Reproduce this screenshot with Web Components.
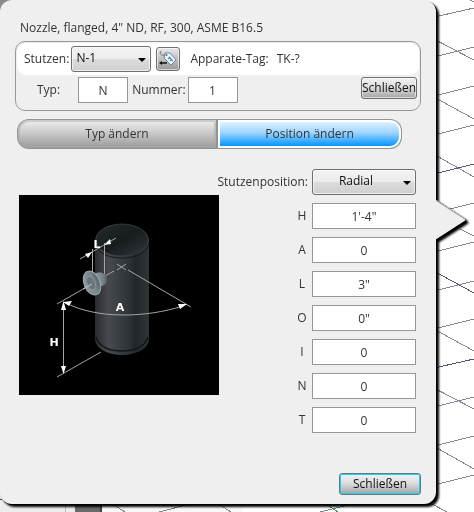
<!DOCTYPE html>
<html lang="de">
<head>
<meta charset="utf-8">
<title>Stutzen</title>
<style>
  html, body { margin: 0; min-height: 100%; }
  body { font: 12px/16px "Open Sans", "Noto Sans", sans-serif; color: #333; background: #fff; }
</style>
</head>
<body>
<nozzle-editor></nozzle-editor>

<script>
const define = (name, markup, setup) => {
  const template = document.createElement('template');
  template.innerHTML = markup;
  customElements.define(name, class extends HTMLElement {
    constructor() {
      super();
      this.attachShadow({ mode: 'open' }).append(template.content.cloneNode(true));
    }
    connectedCallback() { if (setup) setup(this, this.shadowRoot); }
  });
};

/* Wireframe canvas behind the callout */
define('wire-canvas', `
<style>
  :host { display: block; overflow: hidden; background: #fff; }
  svg { display: block; }
</style>
<svg width="474" height="512" viewBox="0 0 474 512" aria-hidden="true" shape-rendering="crispEdges" fill="none">
  <path fill="#8a8a8a" d="M0 0h14v14H0z"/>
  <path fill="#ececec" d="M0 490h75v22H0z"/>
  <path fill="#f8f8f8" d="M102 500h140v12h-140z"/>
  <path stroke="#b4bfca" d="M65.500 500v12"/>
  <path fill="#6a6a6a" d="M75 500h25v12H75z"/>
  <path fill="#444" d="M100 500h2v12h-2z"/>
  <path fill="#1c4f80" d="M0 499h2v1H0z"/>
  <path stroke="#858592" d="M430 18L474 8M430 37L474 60M430 58L474 47M430 97L474 86M430 95L474 119M430 136L474 125M430 152L474 177M450 209L474 203M460 229L474 236M430 253L474 242M430 292L474 281M430 330L474 319M430 327L474 351M430 386L474 409M430 408L474 397M430 447L474 436M430 444L474 469M430 486L474 475M470 0L474 2M430 503L447 512M320 512L352 504M111 503L125 512M159 512L190 504M217 503L231 512"/>
  <path stroke="#50566e" d="M430 175L474 164M430 269L474 293M430 369L474 359"/>
  <path stroke="#4b944b" d="M324 503L338 512"/>
</svg>`);

define('callout-panel', `
<style>
  :host { display: flex; flex-direction: column; position: relative; box-sizing: border-box; border-radius: 12px;
    background: #efefef; filter: drop-shadow(1px 1px 0 #000) drop-shadow(2px 2px 1px #000); }
  .tip { position: absolute; left: 100%; top: 200px; display: block; margin-left: -1px; }
</style>
<slot></slot>
<svg class="tip" width="31" height="40" viewBox="0 0 31 40" aria-hidden="true"><path d="M0 0L31 20L0 40Z" fill="#efefef"/><path d="M1 0L30 19" stroke="#bbb"/></svg>`);

define('push-button', `
<style>
  :host { display: block; }
  button { display: flex; align-items: center; justify-content: center; box-sizing: border-box; width: 100%; height: 22px; padding: 0;
    border: 1px solid #707070; border-radius: 3px; color: #111; font: inherit;
    background: linear-gradient(#f2f2f2, #dedede 45%, #a4a4a4); box-shadow: inset 0 0 0 1px #ffffff90; }
  :host([square]) button { height: 24px; background: linear-gradient(#e8e8e8, #999); }
  :host([default]) button { border-color: #5d7f88; box-shadow: inset 0 0 0 1px #1fcdf5; }
</style>
<button type="button"><slot></slot></button>`, (host, root) => {
  if (host.title) root.querySelector('button').setAttribute('aria-label', host.title);
});

define('tag-icon', `
<style>:host { display: block; } svg { display: block; }</style>
<svg width="18" height="18" viewBox="0 0 18 18" aria-hidden="true">
  <path d="M2 1C0 4 2 6 7 5" fill="none" stroke="#657482"/>
  <path d="M6 3L11 3L17 10L12 15L5 8Z" fill="#f4f8fb" stroke="#6c8397"/>
  <circle cx="7.500" cy="5" r="1" fill="#536b80"/>
  <path d="M9 9l2-2M11 11l2-2M10 7l4 4" stroke="#3e8ed0" stroke-width="1.300"/>
  <path d="M8 13H2" stroke="#111" stroke-width="1.500"/><path d="M0 13l3-2v4z" fill="#111"/>
</svg>`);

define('drop-down', `
<style>
  :host { display: grid; }
  select, svg { grid-area: 1 / 1; }
  select { appearance: none; box-sizing: border-box; width: 100%; height: 26px; margin: 0; padding: 0 24px 2px 4px;
    border: 1px solid #707070; border-radius: 3px; color: #111; font: inherit;
    background: linear-gradient(#f3f3f3, #ececec 48%, #dcdcdc 52%, #cfcfcf); box-shadow: inset 0 0 0 1px #ffffffa0; }
  :host([centered]) select { padding: 0 16px 2px 0; text-align-last: center; }
  svg { align-self: center; justify-self: end; margin: 2px 5px 0 0; pointer-events: none; }
</style>
<select></select>
<svg width="8" height="4" viewBox="0 0 8 4" aria-hidden="true"><path d="M0 0h8L4 4z" fill="#000"/></svg>`, (host, root) => {
  const select = root.querySelector('select');
  select.setAttribute('aria-label', host.getAttribute('label'));
  select.replaceChildren(...host.getAttribute('options').split('|').map(t => new Option(t)));
});

define('value-field', `
<style>
  :host { display: flex; align-items: center; justify-content: flex-end; gap: var(--field-gap, 4px); }
  input { box-sizing: border-box; width: var(--field-width, 104px); height: 26px; margin: 0; padding: 0;
    border: 1px solid #969696; border-radius: 0; background: #fff; color: #333; font: inherit; text-align: center; }
  label { min-width: 12px; text-align: center; }
</style>
<label for="value"></label><input id="value" type="text">`, (host, root) => {
  root.querySelector('label').textContent = host.getAttribute('label');
  root.querySelector('input').value = host.getAttribute('value');
});

define('nozzle-header', `
<style>
  :host { display: block; box-sizing: border-box; border: 1px solid #969696; border-radius: 10px; padding: 1px; }
  .top, .bottom { display: flex; align-items: center; }
  .top { height: 32px; padding-left: 7px; border-radius: 9px; background: #fff; }
  .top drop-down { width: 80px; margin: 0 5px 0 2px; }
  .top push-button { width: 24px; margin-right: 10px; }
  .tag { margin-left: 8px; }
  .bottom { padding: 2px 2px 6px 20px; }
  .bottom value-field { --field-width: 50px; }
  .type { --field-gap: 18px; margin-right: 4px; }
  .number { --field-gap: 2px; }
  .bottom push-button { width: 56px; margin: 0 0 4px auto; }
</style>
<div class="top">
  <span>Stutzen:</span><drop-down label="Stutzen" options="N-1"></drop-down>
  <push-button square title="Tag bearbeiten"><tag-icon></tag-icon></push-button>
  <span>Apparate-Tag:</span><span class="tag">TK-?</span>
</div>
<div class="bottom">
  <value-field class="type" label="Typ:" value="N"></value-field>
  <value-field class="number" label="Nummer:" value="1"></value-field>
  <push-button>Schließen</push-button>
</div>`);

define('mode-switch', `
<style>
  :host { display: grid; grid-template-columns: 201fr 184fr; height: 30px; }
  button { box-sizing: border-box; margin: 0; padding: 0 0 1px; border: 1px solid #8c9696; color: #333; font: inherit; }
  .type { border-right-width: 2px; border-radius: 12px 0 0 12px; background: linear-gradient(#f0f0f0, #cfcfcf 40%, #999); box-shadow: inset 0 0 0 2px #a8a8a880; }
  .position { border-left: 0; border-radius: 0 12px 12px 0; box-shadow: inset 0 0 0 2px #fff;
    background: linear-gradient(#eaf6ff, #9ed5ff 45%, #0c98ff 90%); }
</style>
<button type="button" class="type" aria-pressed="false">Typ ändern</button>
<button type="button" class="position" aria-pressed="true">Position ändern</button>`);

define('nozzle-diagram', `
<style>
  :host { display: block; width: 200px; background: #000; }
  svg { display: block; width: 100%; }
  text { font: bold 11px "DejaVu Sans", sans-serif; fill: #fff; text-anchor: middle; }
</style>
<svg viewBox="0 0 200 200" role="img" aria-label="Radiale Stutzenposition mit den Maßen H, A und L">
  <defs>
    <linearGradient id="shell"><stop offset="0" stop-color="#292b2e"/><stop offset=".25" stop-color="#47494e"/><stop offset=".6" stop-color="#303538"/><stop offset=".75" stop-color="#20272a"/><stop offset="1" stop-color="#303437"/></linearGradient>
    <linearGradient id="lid" x2="1" y2="1"><stop offset="0" stop-color="#252b2e"/><stop offset=".5" stop-color="#171c1e"/><stop offset="1" stop-color="#30373a"/></linearGradient>
    <linearGradient id="flange"><stop offset="0" stop-color="#8e999f"/><stop offset=".6" stop-color="#7a868d"/><stop offset="1" stop-color="#55616a"/></linearGradient>
  </defs>
  <path fill="url(#shell)" d="M76 46C76 36 88 29 103 29S130 36 130 46V144C130 153 118 160 103 160S76 153 76 144Z"/>
  <ellipse cx="103" cy="45" rx="26" ry="16" fill="url(#lid)" stroke="#3b4144" stroke-width=".7"/>
  <path d="M76 47C77 57 88 63 103 63S129 57 130 47" fill="none" stroke="#15191b"/>
  <path d="M77 142C80 152 91 156 103 156S126 152 129 142" fill="none" stroke="#121618" stroke-width="1.500"/>
  <g fill="none" stroke="#a3a5a6" stroke-width="1">
    <path d="M95 76L84 82M66 93L38 109M98 69L107 75M98 75L107 69M109 75L172 112M38 182L82 157"/>
    <path d="M44.500 110V176M73.500 54V78M85.500 48V80M61 64L97 43"/>
    <path d="M47 108C78 124 126 123 164 111"/>
  </g>
  <path fill="url(#flange)" d="M76 79C80 76 88 78 88 84S84 91 79 92Z"/>
  <ellipse cx="73" cy="88" rx="8" ry="12.500" transform="rotate(-22 73 88)" fill="url(#flange)" stroke="#a5aeb3"/>
  <ellipse cx="72" cy="88" rx="4" ry="7" transform="rotate(-22 72 88)" fill="#67747c" stroke="#87939a"/>
  <path d="M64 94L73 89" stroke="#c6cbce"/>
  <path fill="#fff" d="M44.500 106L47 115H42ZM44.500 179L42 171H47ZM44 107L53 106L50 111ZM168 109L159 109L161 114ZM73 57L66 59L69 63ZM85 50L91 44L92 49Z"/>
  <text x="101" y="116">A</text><text x="35" y="151">H</text><text x="78" y="53">L</text>
</svg>`);

define('position-form', `
<style>
  :host { display: grid; grid-template-columns: auto auto; justify-content: space-between; align-items: start; }
  .select { grid-column: 1 / -1; display: flex; align-items: center; justify-content: flex-end; gap: 4px; }
  .fields { display: grid; gap: 8px; padding-top: 8px; }
  drop-down { width: 104px; }
</style>
<div class="select"><span>Stutzenposition:</span><drop-down centered label="Stutzenposition" options="Radial"></drop-down></div>
<nozzle-diagram></nozzle-diagram>
<div class="fields">
  <value-field label="H" value="1'-4&quot;"></value-field>
  <value-field label="A" value="0"></value-field>
  <value-field label="L" value="3&quot;"></value-field>
  <value-field label="O" value="0&quot;"></value-field>
  <value-field label="I" value="0"></value-field>
  <value-field label="N" value="0"></value-field>
  <value-field label="T" value="0"></value-field>
</div>`);

define('nozzle-editor', `
<style>
  :host { display: grid; min-height: 100vh; }
  wire-canvas, callout-panel { grid-area: 1 / 1; }
  callout-panel { margin: 0 38px 8px 0; padding: 20px 15px 9px; }
  .title { margin-left: 5px; }
  nozzle-header { margin: 5px 0 0; }
  mode-switch { margin: 8px 19px 0 2px; }
  position-form { margin: 20px 5px 0 4px; }
  .close { width: 82px; margin: auto 0 0 auto; }
</style>
<wire-canvas></wire-canvas>
<callout-panel>
  <div class="title">Nozzle, flanged, 4" ND, RF, 300, ASME B16.5</div>
  <nozzle-header></nozzle-header>
  <mode-switch></mode-switch>
  <position-form></position-form>
  <push-button class="close" default>Schließen</push-button>
</callout-panel>`);
</script>
</body>
</html>
